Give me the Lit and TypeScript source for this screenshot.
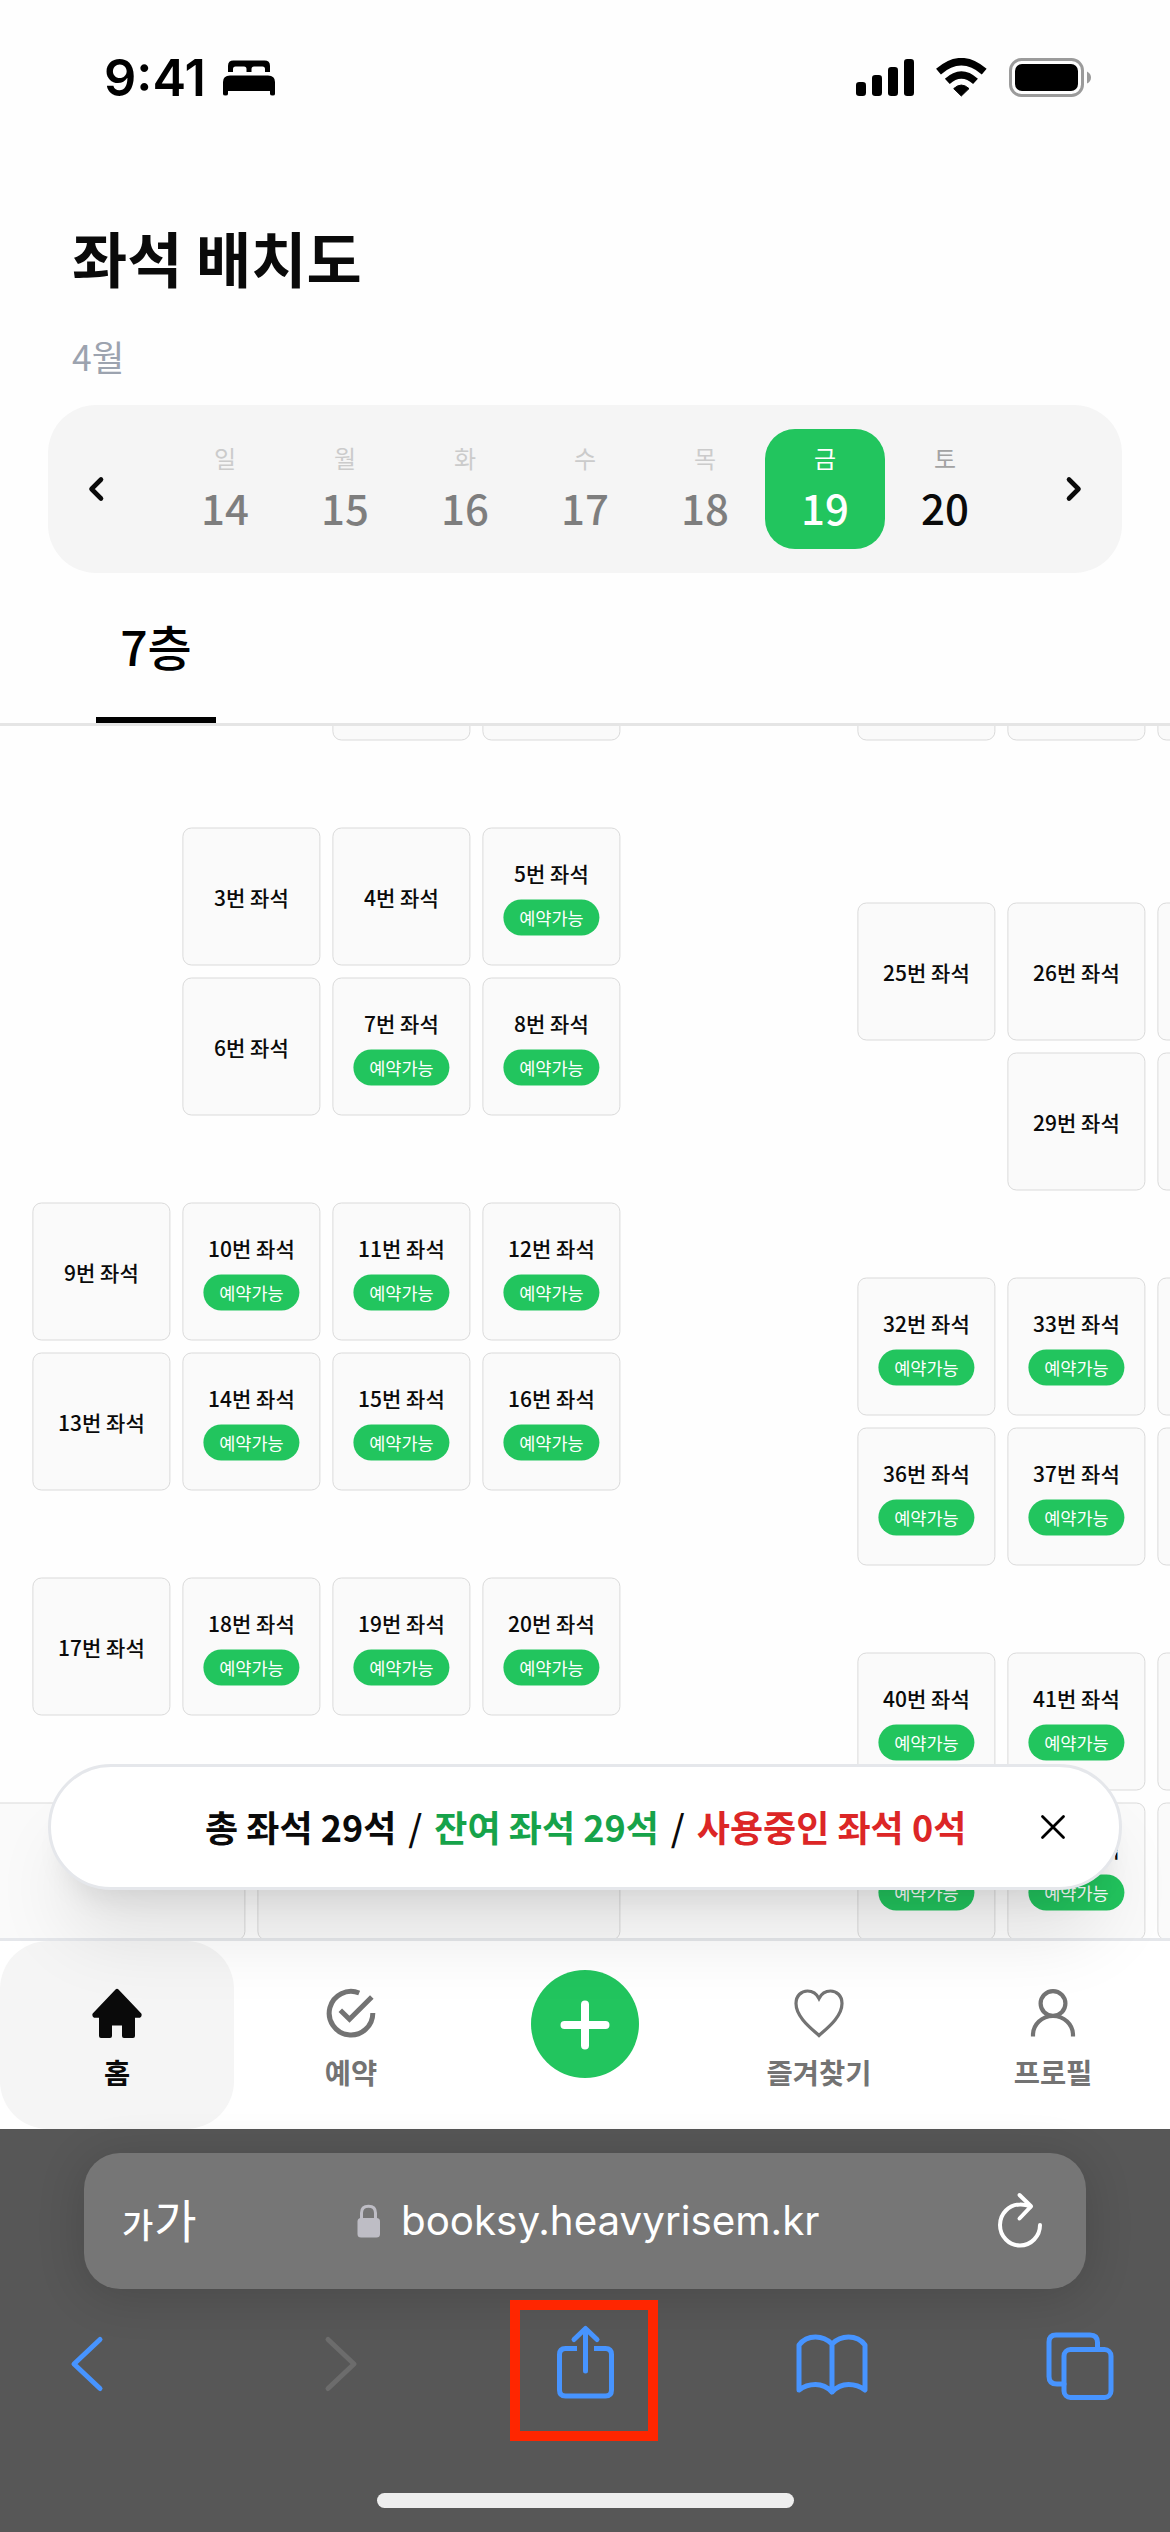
import { LitElement, html, css, nothing } from "lit";
import { customElement, property } from "lit/decorators.js";
import { classMap } from "lit/directives/class-map.js";
import { styleMap } from "lit/directives/style-map.js";

interface Seat {
  col: number;
  row: number;
  no?: number;
  free?: boolean;
  cols?: number;
}

/* Every seat covers two 75px tracks of the floor grid. */
const SEATS: Seat[] = [
  { col: 7, row: 1 },
  { col: 9, row: 1 },
  { col: 5, row: 4, no: 3 },
  { col: 7, row: 4, no: 4 },
  { col: 9, row: 4, no: 5, free: true },
  { col: 5, row: 6, no: 6 },
  { col: 7, row: 6, no: 7, free: true },
  { col: 9, row: 6, no: 8, free: true },
  { col: 3, row: 9, no: 9 },
  { col: 5, row: 9, no: 10, free: true },
  { col: 7, row: 9, no: 11, free: true },
  { col: 9, row: 9, no: 12, free: true },
  { col: 3, row: 11, no: 13 },
  { col: 5, row: 11, no: 14, free: true },
  { col: 7, row: 11, no: 15, free: true },
  { col: 9, row: 11, no: 16, free: true },
  { col: 3, row: 14, no: 17 },
  { col: 5, row: 14, no: 18, free: true },
  { col: 7, row: 14, no: 19, free: true },
  { col: 9, row: 14, no: 20, free: true },
  { col: 1, row: 17, cols: 5 },
  { col: 6, row: 17, cols: 5 },
  { col: 14, row: 1 },
  { col: 16, row: 1 },
  { col: 18, row: 1 },
  { col: 14, row: 5, no: 25 },
  { col: 16, row: 5, no: 26 },
  { col: 18, row: 5 },
  { col: 16, row: 7, no: 29 },
  { col: 18, row: 7 },
  { col: 14, row: 10, no: 32, free: true },
  { col: 16, row: 10, no: 33, free: true },
  { col: 18, row: 10 },
  { col: 14, row: 12, no: 36, free: true },
  { col: 16, row: 12, no: 37, free: true },
  { col: 18, row: 12 },
  { col: 14, row: 15, no: 40, free: true },
  { col: 16, row: 15, no: 41, free: true },
  { col: 18, row: 15 },
  { col: 14, row: 17, free: true },
  { col: 16, row: 17, no: 45, free: true },
  { col: 18, row: 17 },
];

const DAYS = [
  { name: "일", date: 14, past: true },
  { name: "월", date: 15, past: true },
  { name: "화", date: 16, past: true },
  { name: "수", date: 17, past: true },
  { name: "목", date: 18, past: true },
  { name: "금", date: 19, selected: true },
  { name: "토", date: 20 },
];

@customElement("status-bar")
class StatusBar extends LitElement {
  static styles = css`
    :host {
      display: flex;
      align-items: center;
      height: 156px;
      box-sizing: border-box;
      padding: 0 79px 0 104px;
    }
    .time {
      font: 600 50.500px/60px Inter, "Liberation Sans", sans-serif;
      letter-spacing: 0;
      color: #000;
      width: 119px;
    }
    .bed { width: 52px; height: 36px; }
    .system { margin-left: auto; width: 235px; height: 40px; }
  `;
  render() {
    return html`
      <span class="time">9:41</span>
      <svg class="bed" viewBox="0 0 52 36">
        <path d="M5 12V6Q5 .6 10.500 .6H41.500Q47 .6 47 6V12H42V9Q42 6.500 39.500 6.500H31Q28.500 6.500 28.500 9V12H23.500V9Q23.500 6.500 21 6.500H12.500Q10 6.500 10 9V12Z"/>
        <path d="M0 22Q0 15.400 7 15.400H45Q52 15.400 52 22V34Q52 35.600 49.800 35.600Q47 35.600 47 34V31H5V34Q5 35.600 2.500 35.600Q0 35.600 0 34Z"/>
      </svg>
      <svg class="system" viewBox="856 58 235 40">
        <rect x="856" y="82" width="10" height="14" rx="3.200"/>
        <rect x="872" y="75" width="10" height="21" rx="3.200"/>
        <rect x="888" y="67" width="10" height="29" rx="3.200"/>
        <rect x="904" y="59" width="10" height="37" rx="3.200"/>
        <path d="M961.300 96L953.700 88.600Q961.300 81.500 969 88.600Z" stroke="#000" stroke-width="1" stroke-linejoin="round"/>
        <g fill="none" stroke="#000">
          <path d="M947.300 81.300Q961.300 68.500 975.500 81.300" stroke-width="7.200"/>
          <path d="M938.500 71.600Q961.300 51.800 984.200 71.600" stroke-width="7.400"/>
        </g>
        <rect x="1010.500" y="59.500" width="72" height="36" rx="11" fill="none" stroke="#9b9b9b" stroke-width="3"/>
        <rect x="1015" y="64" width="63" height="27" rx="7"/>
        <path d="M1087 71.500Q1091 73.500 1091 77.500T1087 83.500Z" fill="#9b9b9b"/>
      </svg>
    `;
  }
}

@customElement("date-strip")
class DateStrip extends LitElement {
  static styles = css`
    :host {
      display: flex;
      align-items: center;
      justify-content: space-between;
      height: 168px;
      margin: 0 48px;
      padding: 0 36px;
      box-sizing: border-box;
      border-radius: 48px;
      background: #f5f5f5;
    }
    .arrow { width: 24px; height: 30px; fill: none; stroke: #0a0a0a; stroke-width: 4.600; stroke-linecap: round; stroke-linejoin: round; }
    .days { display: flex; }
    .day {
      width: 120px;
      height: 120px;
      border-radius: 30px;
      display: flex;
      flex-direction: column;
      align-items: center;
      color: #0a0a0a;
    }
    .name { font-size: 24px; line-height: 36px; margin-top: 11px; color: #a3a3a3; }
    .date { font-size: 42px; line-height: 60px; font-weight: 500; margin-top: 1px; }
    .past { opacity: 0.5; }
    .selected { background: #22c55e; }
    .selected, .selected .name { color: #fff; }
  `;
  render() {
    return html`
      <svg class="arrow" viewBox="0 0 24 30"><path d="M17 5.500L7.500 15L17 24.500"/></svg>
      <div class="days">
        ${DAYS.map(
          (d) => html`<div class=${classMap({ day: true, past: !!d.past, selected: !!d.selected })}>
            <span class="name">${d.name}</span><span class="date">${d.date}</span>
          </div>`
        )}
      </div>
      <svg class="arrow" viewBox="0 0 24 30"><path d="M7 5.500L16.500 15L7 24.500"/></svg>
    `;
  }
}

@customElement("seat-map")
class SeatMap extends LitElement {
  static styles = css`
    :host { display: block; height: 1212px; overflow: hidden; }
    .floor {
      display: grid;
      grid-template-columns: repeat(19, 75px);
      grid-template-rows: repeat(18, 75px);
      width: 1425px;
      margin: -130px 0 0 -124px;
      transform: translate(0.4px, 0.5px);
    }
    .seat {
      grid-row-end: span 2;
      margin: 6px;
      box-sizing: border-box;
      border: 1.300px solid #dadada;
      border-radius: 9px;
      background: #fafafa;
      display: flex;
      flex-direction: column;
      align-items: center;
      justify-content: center;
      gap: 12px;
      font-size: 21px;
      line-height: 30px;
      font-weight: 500;
      color: #0a0a0a;
      white-space: nowrap;
    }
    .label { height: 30px; }
    .badge {
      width: 96px;
      height: 36px;
      border-radius: 18px;
      background: #22c55e;
      color: #fff;
      font-size: 17.500px;
      line-height: 36px;
      font-weight: 400;
      text-align: center;
    }
  `;
  render() {
    return html`<div class="floor">
      ${SEATS.map(
        (s) => html`<div
          class="seat"
          style=${styleMap({ gridColumn: `${s.col} / span ${s.cols ?? 2}`, gridRowStart: String(s.row) })}
        >
          <span class="label">${s.no ? `${s.no}번 좌석` : nothing}</span>
          ${s.free ? html`<span class="badge">예약가능</span>` : nothing}
        </div>`
      )}
    </div>`;
  }
}

@customElement("seat-summary")
class SeatSummary extends LitElement {
  static styles = css`
    :host {
      position: absolute;
      left: 48px;
      top: 1764px;
      width: 1074px;
      height: 126px;
      box-sizing: border-box;
      border: 3px solid #e5e7eb;
      border-radius: 63px;
      background: #fff;
      box-shadow: 0 60px 75px -15px rgba(0, 0, 0, 0.1), 0 24px 30px -18px rgba(0, 0, 0, 0.1);
      display: flex;
      align-items: center;
      padding: 0 51px 2px 154px;
      color: #0a0a0a;
      font-size: 36px;
      line-height: 54px;
      font-weight: 700;
      white-space: nowrap;
    }
    .counts { display: flex; gap: 12px; }
    .slash { font-weight: 500; }
    .left { color: #16a34a; }
    .used { color: #dc2626; }
    .close { margin: 2px 0 0 auto; width: 30px; height: 30px; stroke: #000; stroke-width: 2.800; stroke-linecap: round; }
  `;
  render() {
    return html`
      <div class="counts">
        <span>총 좌석 29석</span><span class="slash">/</span>
        <span class="left">잔여 좌석 29석</span><span class="slash">/</span>
        <span class="used">사용중인 좌석 0석</span>
      </div>
      <svg class="close" viewBox="0 0 30 30"><path d="M4.500 4.500L25.500 25.500M25.500 4.500L4.500 25.500"/></svg>
    `;
  }
}

@customElement("tab-bar")
class TabBar extends LitElement {
  static styles = css`
    :host {
      display: grid;
      grid-template-columns: repeat(5, 1fr);
      height: 191px;
      box-sizing: border-box;
      border-top: 3px solid #e5e7eb;
      background: #fff;
    }
    .item {
      display: flex;
      flex-direction: column;
      align-items: center;
      border-radius: 48px;
      color: #737373;
      font-size: 28.500px;
      line-height: 42px;
      font-weight: 700;
    }
    .item svg { width: 60px; height: 60px; margin: 42px 0 8px; }
    .active { background: #f5f5f5; color: #0a0a0a; }
    .add {
      width: 108px;
      height: 108px;
      border-radius: 54px;
      background: #22c55e;
      justify-self: center;
      margin-top: 29px;
    }
    .line { fill: none; stroke: currentColor; }
  `;
  render() {
    return html`
      <div class="item active">
        <svg viewBox="0 0 60 60">
          <path d="M28.500 6.500Q30 5 31.500 6.500L54.300 30.500Q55.500 33 53 34.800H48V53Q48 55 46 55H37Q35 55 35 53V42.500H25V53Q25 55 23 55H14Q12 55 12 53V34.800H7Q4.500 33 5.700 30.500Z" fill="currentColor"/>
        </svg>
        <span>홈</span>
      </div>
      <div class="item">
        <svg class="line" viewBox="0 0 60 60" stroke-width="5">
          <path d="M38.200 10A21.800 21.800 0 1 0 51.800 30"/>
          <path d="M19.300 27.300L28.500 36.300L50.800 14"/>
        </svg>
        <span>예약</span>
      </div>
      <svg class="add" viewBox="0 0 108 108">
        <path d="M54 34.500V75.500M33.500 55H74.500" stroke="#fff" stroke-width="8" stroke-linecap="round"/>
      </svg>
      <div class="item">
        <svg class="line" viewBox="0 0 60 60" stroke-width="3.200">
          <path d="M30 52.500C21 44.500 7 33.500 7 20.500C7 12.500 12.500 8 18.500 8C24 8 28 11.500 30 15.500C32 11.500 36 8 41.500 8C47.500 8 53 12.500 53 20.500C53 33.500 39 44.500 30 52.500Z"/>
        </svg>
        <span>즐겨찾기</span>
      </div>
      <div class="item">
        <svg class="line" viewBox="0 0 60 60" stroke-width="4.200">
          <circle cx="30" cy="20.500" r="12.400"/>
          <path d="M10 53.500V52A20 19 0 0 1 50 52V53.500"/>
        </svg>
        <span>프로필</span>
      </div>
    `;
  }
}

@customElement("browser-bar")
class BrowserBar extends LitElement {
  static styles = css`
    :host {
      position: relative;
      display: flex;
      flex-direction: column;
      height: 403px;
      box-sizing: border-box;
      padding-top: 24px;
      background: #575757;
      color: #fff;
    }
    .address {
      height: 136px;
      margin: 0 84px;
      border-radius: 36px;
      background: #767676;
      box-shadow: 0 6px 48px rgba(0, 0, 0, 0.16);
      display: flex;
      align-items: center;
      padding: 0 38px;
    }
    .zoom { display: flex; align-items: baseline; gap: 1px; width: 232px; line-height: 60px; font-weight: 500; }
    .small { font-size: 34px; }
    .large { font-size: 46px; font-weight: 400; }
    .lock { width: 30px; height: 36px; margin-right: 17px; }
    .url { font: 400 40.300px/60px Inter, "Liberation Sans", sans-serif; white-space: nowrap; }
    .reload { margin-left: auto; width: 56px; height: 60px; }
    .tools { display: flex; align-items: flex-start; padding: 35px 0 0 68px; }
    .tools svg { height: 76px; fill: none; stroke: #4794ff; stroke-width: 5; stroke-linecap: round; stroke-linejoin: round; }
    .back { width: 36px; }
    .forward { width: 36px; margin-left: 220px; }
    .tools .forward { stroke: #6c6c6c; }
    .share { width: 62px; margin-left: 194px; }
    .book { width: 76px; margin-left: 178px; }
    .tabs { width: 72px; margin-left: 174px; }
    .mark {
      position: absolute;
      left: 510px;
      top: 171px;
      width: 148px;
      height: 141px;
      box-sizing: border-box;
      border: 10px solid #ff2600;
    }
    .home { width: 417px; height: 15px; border-radius: 8px; background: #eee; margin: auto auto 24px; }
  `;
  render() {
    return html`
      <div class="address">
        <span class="zoom"><span class="small">가</span><span class="large">가</span></span>
        <svg class="lock" viewBox="0 0 30 36">
          <path d="M7.500 18V10Q7.500 3.300 14.500 3.300T21.500 10V18" fill="none" stroke="#bebdc5" stroke-width="3"/>
          <rect x="3.500" y="15" width="22.500" height="19.500" rx="3.500" fill="#bebdc5"/>
        </svg>
        <span class="url">booksy.heavyrisem.kr</span>
        <svg class="reload" viewBox="0 0 56 60" fill="none" stroke="#fff" stroke-width="4" stroke-linecap="round" stroke-linejoin="round">
          <path d="M48 34A20 20.500 0 1 1 28 13.500Q33 13.300 38.500 15.500"/>
          <path d="M27.500 4L39 15.300L27.500 27.500"/>
        </svg>
      </div>
      <div class="tools">
        <svg class="back" viewBox="0 0 36 76"><path d="M32 15.500L6 40L32 64.500"/></svg>
        <svg class="forward" viewBox="0 0 36 76"><path d="M4 15.500L30 40L4 64.500"/></svg>
        <svg class="share" viewBox="0 0 62 76">
          <path d="M23 24.500H11.500Q5.500 24.500 5.500 30.500V66Q5.500 72 11.500 72H51.500Q57.500 72 57.500 66V30.500Q57.500 24.500 51.500 24.500H40" stroke-linecap="butt"/>
          <path d="M31.500 47V5M20 15.500L31.500 4.500L43 15.500"/>
        </svg>
        <svg class="book" viewBox="0 0 76 76">
          <path d="M38 20Q31 13 21.500 13Q11 13 5 21V66Q12 60.500 21.500 60.500Q31 60.500 38 68Q45 60.500 54.500 60.500Q64 60.500 71 66V21Q65 13 54.500 13Q45 13 38 20ZV68"/>
        </svg>
        <svg class="tabs" viewBox="0 0 72 76">
          <rect x="20" y="25.500" width="47" height="48" rx="6.500"/>
          <path d="M20 60H13Q5 60 5 52.500V18Q5 11 12 11H46Q53.500 11 53.500 18.500V25.500"/>
        </svg>
      </div>
      <div class="home"></div>
      <div class="mark"></div>
    `;
  }
}

@customElement("app-root")
class AppRoot extends LitElement {
  @property() heading = "좌석 배치도";

  static styles = css`
    :host {
      display: block;
      position: relative;
      width: 1170px;
      height: 2532px;
      overflow: hidden;
      background: #fefefe;
      font-family: "Noto Sans CJK KR", "Noto Sans", sans-serif;
    }
    .title { margin: 56px 72px 0; font-size: 60px; line-height: 90px; font-weight: 700; color: #0a0a0a; }
    .month { margin: 27px 72px 22px; font-size: 35.500px; line-height: 54px; color: #9ca3af; }
    .floors { display: flex; height: 153px; padding-left: 96px; box-sizing: border-box; border-bottom: 3px solid #e5e5e5; }
    .floor {
      width: 120px;
      box-sizing: border-box;
      border-bottom: 6px solid #000;
      font-size: 48px;
      font-weight: 500;
      line-height: 72px;
      padding-top: 36px;
      text-align: center;
      color: #000;
    }
  `;
  render() {
    return html`
      <status-bar></status-bar>
      <div class="title">${this.heading}</div>
      <div class="month">4월</div>
      <date-strip></date-strip>
      <div class="floors"><div class="floor">7층</div></div>
      <seat-map></seat-map>
      <tab-bar></tab-bar>
      <seat-summary></seat-summary>
      <browser-bar></browser-bar>
    `;
  }
}
